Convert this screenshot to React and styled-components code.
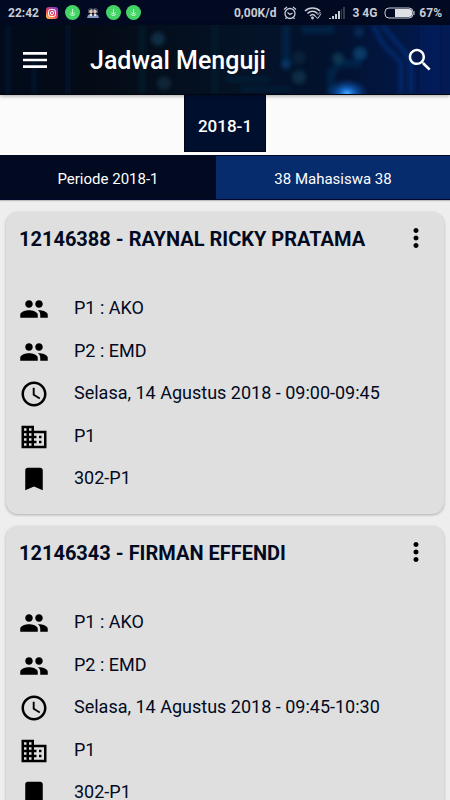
import React from "react";
import styled, { createGlobalStyle } from "styled-components";

const GlobalStyle = createGlobalStyle`
  *, *::before, *::after { box-sizing: border-box; }
  body { margin: 0; background: #eeeeee; font-family: Roboto, sans-serif; }
  button, h1, h2, ul { margin: 0; padding: 0; font: inherit; }
  button { border: 0; background: none; color: inherit; cursor: pointer; }
  ul { list-style: none; }
`;

const Screen = styled.div`
  display: flex;
  flex-direction: column;
  height: 100vh;
  overflow: hidden;
  background: #eeeeee;
`;

const StatusBar = styled.div`
  display: flex;
  flex: none;
  justify-content: space-between;
  align-items: center;
  height: 25px;
  padding: 0 8px;
  background: #020a22;
  color: #c9ccd3;
  font-size: 12px;
  line-height: 16px;
  font-weight: 700;
`;

const StatusGroup = styled.div`
  display: flex;
  align-items: center;
  gap: ${(p) => p.$gap}px;
`;

const AppBar = styled.header`
  position: relative;
  z-index: 2;
  display: flex;
  flex: none;
  align-items: center;
  height: 70px;
  padding: 0 15px 0 20px;
  background: #040d18;
  border-bottom: 1px solid #02060e;
  box-shadow: 0 1px 4px rgba(0, 0, 0, 0.35);
  color: #ffffff;
`;

const Circuit = styled.svg`
  position: absolute;
  inset: 0;
  width: 100%;
  height: 100%;
`;

const IconButton = styled.button`
  position: relative;
  display: flex;
  flex: none;
  align-items: center;
  justify-content: center;
  width: 30px;
  height: ${(p) => p.$height || 30}px;
`;

const Title = styled.h1`
  position: relative;
  flex: 1;
  padding: 2px 0 0 40px;
  font-size: 25px;
  line-height: 30px;
  font-weight: 500;
`;

const Tabs = styled.nav`
  display: flex;
  flex: none;
  justify-content: center;
  align-items: flex-start;
  height: 60px;
  background: #fbfbfb;
`;

const Tab = styled.button`
  && {
    height: 57px;
    padding: 5px 13px 0;
    border: 1px solid #000616;
    border-top: 0;
    background: #010f2f;
    color: #ffffff;
    font-size: 17px;
    line-height: 22px;
    font-weight: 500;
  }
`;

const Summary = styled.div`
  display: grid;
  flex: none;
  grid-template-columns: 48% 52%;
  height: 45px;
  border-bottom: 1px solid #010a2c;
  box-shadow: 0 1px 1px rgba(0, 0, 0, 0.2);
  color: #ffffff;
  font-size: 15px;
  line-height: 20px;
`;

const SummaryCell = styled.div`
  display: flex;
  align-items: center;
  justify-content: center;
  padding-top: 2px;
  border-top: 1px solid #010a25;
  background: ${(p) => (p.$active ? "#062c6e" : "#010a20")};
`;

const CardList = styled.main`
  display: flex;
  flex: 1;
  flex-direction: column;
  gap: 12px;
  min-height: 0;
  padding: 12px 6px;
  overflow-y: auto;
  scrollbar-width: none;
`;

const Card = styled.article`
  flex: none;
  padding: 12px 13px 20px;
  border-radius: 12px;
  background: #dfdfdf;
  box-shadow: 0 1px 3px rgba(0, 0, 0, 0.28);
  color: #020a22;
`;

const CardHeader = styled.div`
  display: flex;
  align-items: flex-start;
  justify-content: space-between;
  height: 70px;
`;

const CardTitle = styled.h2`
  font-size: 20px;
  line-height: 30px;
  font-weight: 700;
`;

const Details = styled.ul`
  display: flex;
  flex-direction: column;
  justify-content: space-between;
  min-height: 200px;
`;

const Detail = styled.li`
  display: flex;
  gap: 25px;
  height: 30px;
  font-size: 18px;
  line-height: 28px;
`;

const Glyph = styled.svg`
  display: block;
  flex: none;
  width: ${(p) => p.$size}px;
  height: ${(p) => p.$size}px;
  fill: ${(p) => p.$fill || "currentColor"};
`;

const WideGlyph = styled.svg`
  display: block;
  flex: none;
`;

const paths = {
  menu: "M3 18h18v-2H3v2zm0-5h18v-2H3v2zm0-7v2h18V6H3z",
  search:
    "M15.5 14h-.79l-.28-.27C15.41 12.59 16 11.11 16 9.5 16 5.91 13.09 3 9.5 3S3 5.91 3 9.5 5.91 16 9.5 16c1.61 0 3.09-.59 4.23-1.57l.27.28v.79l5 4.99L20.49 19l-4.99-5zm-6 0C7.01 14 5 11.99 5 9.5S7.01 5 9.5 5 14 7.01 14 9.5 11.99 14 9.5 14z",
  more: "M12 8c1.1 0 2-.9 2-2s-.9-2-2-2-2 .9-2 2 .9 2 2 2zm0 2c-1.1 0-2 .9-2 2s.9 2 2 2 2-.9 2-2-.9-2-2-2zm0 6c-1.1 0-2 .9-2 2s.9 2 2 2 2-.9 2-2-.9-2-2-2z",
  people:
    "M16 11c1.66 0 2.99-1.34 2.99-3S17.66 5 16 5c-1.66 0-3 1.34-3 3s1.34 3 3 3zm-8 0c1.66 0 2.99-1.34 2.99-3S9.66 5 8 5C6.34 5 5 6.34 5 8s1.34 3 3 3zm0 2c-2.33 0-7 1.17-7 3.5V19h14v-2.5c0-2.33-4.67-3.5-7-3.5zm8 0c-.29 0-.62.02-.97.05 1.16.84 1.97 1.97 1.97 3.45V19h6v-2.5c0-2.33-4.67-3.5-7-3.5z",
  clock:
    "M11.99 2C6.47 2 2 6.48 2 12s4.47 10 9.99 10C17.52 22 22 17.52 22 12S17.52 2 11.99 2zM12 20c-4.42 0-8-3.58-8-8s3.58-8 8-8 8 3.58 8 8-3.58 8-8 8zm.5-13H11v6l5.25 3.15.75-1.23-4.5-2.67z",
  building:
    "M12 7V3H2v18h20V7H12zM6 19H4v-2h2v2zm0-4H4v-2h2v2zm0-4H4V9h2v2zm0-4H4V5h2v2zm4 12H8v-2h2v2zm0-4H8v-2h2v2zm0-4H8V9h2v2zm0-4H8V5h2v2zm10 12h-8v-2h2v-2h-2v-2h2v-2h-2V9h8v10zm-2-8h-2v2h2v-2zm0 4h-2v2h2v-2z",
  bookmark: "M17 3H7c-1.1 0-1.99.9-1.99 2L5 21l7-3 7 3V5c0-1.1-.9-2-2-2z",
};

function Icon({ name, size = 30, fill }) {
  return (
    <Glyph viewBox="0 0 24 24" $size={size} $fill={fill} aria-hidden="true">
      <path d={paths[name]} />
    </Glyph>
  );
}

function DownloadBadge() {
  return (
    <WideGlyph width="15" height="15" viewBox="0 0 15 15" aria-hidden="true">
      <circle cx="7.5" cy="7.5" r="7.5" fill="#43d465" />
      <path d="M7.5 4v5M5.5 7.3l2 2 2-2M4.8 9c1 2 4.4 2 5.4 0" fill="none" stroke="#e7fbe9" strokeWidth=".8" />
    </WideGlyph>
  );
}

function InstagramBadge() {
  return (
    <WideGlyph width="12" height="12" viewBox="0 0 12 12" aria-hidden="true">
      <defs>
        <linearGradient id="insta" x1="0.2" y1="1" x2="0.8" y2="0">
          <stop offset="0" stopColor="#ffc34e" />
          <stop offset="0.45" stopColor="#ee3e5c" />
          <stop offset="1" stopColor="#7b3fd0" />
        </linearGradient>
      </defs>
      <rect width="12" height="12" rx="3" fill="url(#insta)" />
      <rect x="2.5" y="2.5" width="7" height="7" rx="2" fill="none" stroke="#fff" />
      <circle cx="6" cy="6" r="1.6" fill="none" stroke="#fff" />
      <circle cx="8" cy="4" r=".5" fill="#fff" />
    </WideGlyph>
  );
}

function GameBadge() {
  return (
    <WideGlyph width="12" height="12" viewBox="0 0 12 12" aria-hidden="true">
      <path d="M1 6V3q1-2 3-2l2 1 2-1q2 0 3 2v3z" fill="#46516a" />
      <ellipse cx="4" cy="4.5" rx="1.6" ry="2.3" fill="#efc39d" />
      <ellipse cx="8" cy="4.5" rx="1.6" ry="2.3" fill="#d7c8bd" />
      <path d="M0 11l1-3 3-1 2 2 2-2 3 1 1 3z" fill="#8798bd" />
      <path d="M3 7l1 2 1-2M7 7l1 2 1-2" fill="none" stroke="#fff" />
      <path d="M2 3l2-1M8 2l2 1" stroke="#26304a" />
    </WideGlyph>
  );
}

function AlarmIcon() {
  return (
    <WideGlyph width="14" height="14" viewBox="0 0 14 14" fill="none" stroke="#c9ccd3" strokeWidth="1.3" aria-hidden="true">
      <circle cx="7" cy="7.5" r="5" />
      <path d="M1 3.5l3-2.5M13 3.5l-3-2.5M4.5 6.5L7 8.500l2.500-1.500M3.500 11.500l-1 1.500M10.500 11.500l1 1.500" />
    </WideGlyph>
  );
}

function WifiIcon() {
  return (
    <WideGlyph width="18" height="14" viewBox="0 0 18 14" fill="none" stroke="#c9ccd3" aria-hidden="true">
      <path d="M1 5c4-4 11-4 15 0M3.500 7.500c3-3 7-3 10 0M6 10c2-2 3.500-2 5 0" strokeWidth="1.6" />
      <circle cx="8.500" cy="12" r="1.400" fill="#c9ccd3" stroke="none" />
      <path d="M11 10l3 2.500 3-5M13.500 9l3-3" />
    </WideGlyph>
  );
}

function SignalIcon() {
  return (
    <WideGlyph width="16" height="12" viewBox="0 0 16 12" aria-hidden="true">
      <path d="M0 11h2v1H0zM3 9h2v3H3zM6 7h2v5H6zM9 4h2v8H9z" fill="#c9ccd3" />
      <path d="M12 2h1v10h-1zM14 0h2v12h-2z" fill="#353b4d" />
    </WideGlyph>
  );
}

function BatteryIcon() {
  return (
    <WideGlyph width="31" height="12" viewBox="0 0 31 12" aria-hidden="true">
      <rect x="1" y="1" width="28" height="10" rx="4" fill="none" stroke="#c9ccd3" />
      <path d="M11 2h14q3 0 3 3v2q0 3-3 3H11z" fill="#dfe1e4" />
      <path d="M30 4v4" stroke="#c9ccd3" />
    </WideGlyph>
  );
}

function CircuitBackground() {
  return (
    <Circuit viewBox="0 0 450 70" preserveAspectRatio="none" aria-hidden="true">
      <defs>
        <linearGradient id="base">
          <stop offset="0" stopColor="#020b1b" />
          <stop offset="0.2" stopColor="#040b15" />
          <stop offset="0.55" stopColor="#041327" />
          <stop offset="0.75" stopColor="#02122f" />
          <stop offset="1" stopColor="#031b54" />
        </linearGradient>
        <radialGradient id="glow">
          <stop offset="0" stopColor="#46a6ff" />
          <stop offset="0.3" stopColor="#1263bf" />
          <stop offset="1" stopColor="#063580" stopOpacity="0" />
        </radialGradient>
        <filter id="soft" x="-20%" y="-20%" width="140%" height="140%">
          <feGaussianBlur stdDeviation="2" />
        </filter>
      </defs>
      <rect width="450" height="70" fill="url(#base)" />
      <g fill="none" filter="url(#soft)">
        <path d="M8 0v70M34 35v35M68 0v70" stroke="#07143a" strokeWidth="5" opacity=".6" />
        <path d="M142 0v70M215 0v70" stroke="#0a1e32" strokeWidth="8" opacity=".5" />
        <path d="M286 0v40M331 70V48l10-9h20M302 5h28V0" stroke="#08305c" strokeWidth="8" opacity=".5" />
        <path d="M373 0l9 18 19 20v32M382 0l23 28 6 8v34" stroke="#073584" strokeWidth="4" opacity=".7" />
        <path d="M430 0v70" stroke="#05236a" strokeWidth="20" opacity=".35" />
        <path d="M225 55h45M240 65h50" stroke="#06243c" strokeWidth="5" opacity=".7" />
      </g>
      <g filter="url(#soft)" opacity=".6">
        <circle cx="158" cy="14" r="7" fill="#16425f" />
        <circle cx="164" cy="59" r="7" fill="#19354a" />
        <circle cx="286" cy="40" r="5" fill="#0c447b" />
        <circle cx="299" cy="33" r="7" fill="#0b2942" />
        <circle cx="299" cy="53" r="7" fill="#174056" />
        <circle cx="338" cy="34" r="6" fill="#174862" />
        <circle cx="360" cy="29" r="7" fill="#115488" />
        <circle cx="359" cy="7" r="5" fill="#0b3569" />
      </g>
      <ellipse cx="347" cy="69" rx="22" ry="15" fill="url(#glow)" />
    </Circuit>
  );
}

const students = [
  {
    id: "12146388",
    name: "RAYNAL RICKY PRATAMA",
    time: "Selasa, 14 Agustus 2018 - 09:00-09:45",
  },
  {
    id: "12146343",
    name: "FIRMAN EFFENDI",
    time: "Selasa, 14 Agustus 2018 - 09:45-10:30",
  },
];

function StudentCard({ student }) {
  const details = [
    ["people", "P1 : AKO"],
    ["people", "P2 : EMD"],
    ["clock", student.time],
    ["building", "P1"],
    ["bookmark", "302-P1"],
  ];
  return (
    <Card>
      <CardHeader>
        <CardTitle>{student.id} - {student.name}</CardTitle>
        <IconButton type="button" $height={27} aria-label={`Menu ${student.name}`}>
          <Icon name="more" fill="#000000" />
        </IconButton>
      </CardHeader>
      <Details>
        {details.map(([icon, text], i) => (
          <Detail key={i}>
            <Icon name={icon} fill="#000000" />
            <span>{text}</span>
          </Detail>
        ))}
      </Details>
    </Card>
  );
}

export default function App() {
  return (
    <>
      <GlobalStyle />
      <Screen>
        <StatusBar>
          <StatusGroup $gap={7}>
            <span>22:42</span>
            <InstagramBadge />
            <DownloadBadge />
            <GameBadge />
            <StatusGroup $gap={5}>
              <DownloadBadge />
              <DownloadBadge />
            </StatusGroup>
          </StatusGroup>
          <StatusGroup $gap={7}>
            <span>0,00K/d</span>
            <AlarmIcon />
            <WifiIcon />
            <SignalIcon />
            <span>3 4G</span>
            <StatusGroup $gap={4}>
              <BatteryIcon />
              <span>67%</span>
            </StatusGroup>
          </StatusGroup>
        </StatusBar>
        <AppBar>
          <CircuitBackground />
          <IconButton type="button" aria-label="Menu">
            <Icon name="menu" size={32} />
          </IconButton>
          <Title>Jadwal Menguji</Title>
          <IconButton type="button" aria-label="Cari">
            <Icon name="search" />
          </IconButton>
        </AppBar>
        <Tabs>
          <Tab type="button">2018-1</Tab>
        </Tabs>
        <Summary>
          <SummaryCell>Periode 2018-1</SummaryCell>
          <SummaryCell $active>38 Mahasiswa 38</SummaryCell>
        </Summary>
        <CardList>
          {students.map((student) => (
            <StudentCard key={student.id} student={student} />
          ))}
        </CardList>
      </Screen>
    </>
  );
}
